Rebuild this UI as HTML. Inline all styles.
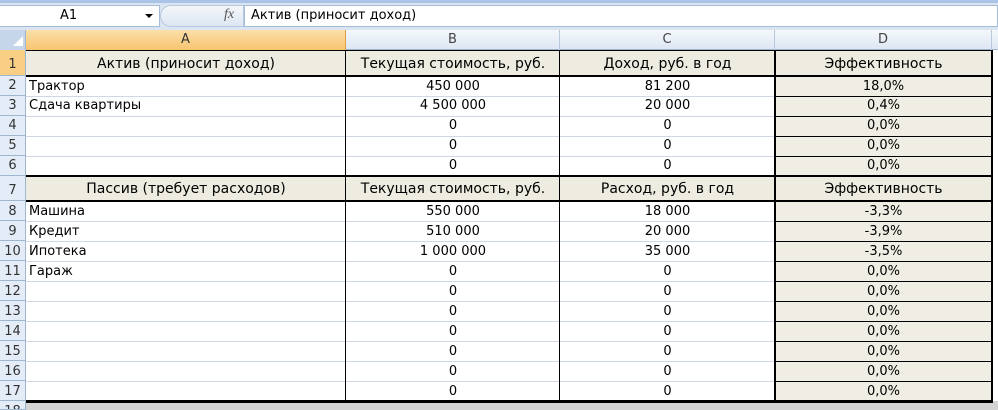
<!DOCTYPE html>
<html><head><meta charset="utf-8"><style>
*{margin:0;padding:0;box-sizing:border-box}
html{width:998px;height:410px;overflow:hidden}
body{width:998px;height:410px;overflow:hidden;background:#d4d4d4;font-family:Tahoma,"DejaVu Sans","Liberation Sans",sans-serif;font-size:13px;position:relative;color:#000}
.a{position:absolute}
.c{position:absolute;white-space:nowrap;overflow:hidden;line-height:20px}
.h{font-size:14px}
.rh{position:absolute;left:0;width:26px;background:#e4ecf7;border-bottom:1px solid #9eb6ce;border-right:1px solid #9eb6ce;text-align:center;color:#333;font-size:13px}
</style></head><body>
<div class="a" style="left:0;top:0;width:998px;height:30px;background:#dbe5f1;border-top:3px solid #a9c4e6"></div>
<div class="a" style="left:0;top:5px;width:160px;height:22px;background:#fff;border:1px solid #a5bcd8;border-left:none"></div>
<div class="c" style="left:60px;top:6px">A1</div>
<div class="a" style="left:145px;top:14px;width:0;height:0;border-left:4px solid transparent;border-right:4px solid transparent;border-top:4px solid #000"></div>
<div class="a" style="left:160px;top:5px;width:84px;height:22px;background:linear-gradient(#f4f7fb,#dce6f2);border:1px solid #b8c9de;border-radius:11px 0 0 11px"></div>
<div class="c" style="left:224px;top:5px;font-style:italic;font-family:'Liberation Serif',serif;color:#555;font-size:14px">fx</div>
<div class="a" style="left:244px;top:5px;width:754px;height:22px;background:#fff;border:1px solid #a5bcd8"></div>
<div class="c" style="left:251px;top:6px">Актив (приносит доход)</div>
<div class="a" style="left:0;top:30px;width:998px;height:20px;background:linear-gradient(#f5f8fc,#dde7f3);border-bottom:1px solid #9eb6ce"></div>
<div class="a" style="left:0;top:30px;width:26px;height:20px;background:#c6d6ea;border-right:1px solid #9eb6ce"></div>
<div class="a" style="left:13px;top:36px;width:0;height:0;border-left:10px solid transparent;border-bottom:10px solid #fff"></div>
<div class="c" style="left:26px;top:30px;width:320px;height:20px;background:linear-gradient(#fbe0a8,#f8c471);border-right:1px solid #e0a040;text-align:center;color:#333">A</div>
<div class="c" style="left:346px;top:30px;width:214px;height:20px;border-right:1px solid #b8c9de;text-align:center;color:#444">B</div>
<div class="c" style="left:560px;top:30px;width:215px;height:20px;border-right:1px solid #b8c9de;text-align:center;color:#444">C</div>
<div class="c" style="left:775px;top:30px;width:217px;height:20px;border-right:1px solid #b8c9de;text-align:center;color:#444">D</div>
<div class="a" style="left:26px;top:50px;width:972px;height:351px;background:#fff"></div>
<div class="a" style="left:775px;top:50px;width:217px;height:351px;background:#f0eee4"></div>
<div class="a" style="left:26px;top:50px;width:966px;height:26px;background:#eeece1"></div>
<div class="a" style="left:26px;top:176px;width:966px;height:25px;background:#eeece1"></div>
<div class="a" style="left:26px;top:96px;width:966px;height:0;border-top:1px solid #d0d7e5"></div>
<div class="a" style="left:26px;top:116px;width:966px;height:0;border-top:1px solid #d0d7e5"></div>
<div class="a" style="left:26px;top:136px;width:966px;height:0;border-top:1px solid #d0d7e5"></div>
<div class="a" style="left:26px;top:156px;width:966px;height:0;border-top:1px solid #d0d7e5"></div>
<div class="a" style="left:26px;top:221px;width:966px;height:0;border-top:1px solid #d0d7e5"></div>
<div class="a" style="left:26px;top:241px;width:966px;height:0;border-top:1px solid #d0d7e5"></div>
<div class="a" style="left:26px;top:261px;width:966px;height:0;border-top:1px solid #d0d7e5"></div>
<div class="a" style="left:26px;top:281px;width:966px;height:0;border-top:1px solid #d0d7e5"></div>
<div class="a" style="left:26px;top:301px;width:966px;height:0;border-top:1px solid #d0d7e5"></div>
<div class="a" style="left:26px;top:321px;width:966px;height:0;border-top:1px solid #d0d7e5"></div>
<div class="a" style="left:26px;top:341px;width:966px;height:0;border-top:1px solid #d0d7e5"></div>
<div class="a" style="left:26px;top:361px;width:966px;height:0;border-top:1px solid #d0d7e5"></div>
<div class="a" style="left:26px;top:381px;width:966px;height:0;border-top:1px solid #d0d7e5"></div>
<div class="a" style="left:775px;top:96px;width:217px;border-top:1px solid #000"></div>
<div class="a" style="left:775px;top:116px;width:217px;border-top:1px solid #000"></div>
<div class="a" style="left:775px;top:136px;width:217px;border-top:1px solid #000"></div>
<div class="a" style="left:775px;top:156px;width:217px;border-top:1px solid #000"></div>
<div class="a" style="left:775px;top:221px;width:217px;border-top:1px solid #000"></div>
<div class="a" style="left:775px;top:241px;width:217px;border-top:1px solid #000"></div>
<div class="a" style="left:775px;top:261px;width:217px;border-top:1px solid #000"></div>
<div class="a" style="left:775px;top:281px;width:217px;border-top:1px solid #000"></div>
<div class="a" style="left:775px;top:301px;width:217px;border-top:1px solid #000"></div>
<div class="a" style="left:775px;top:321px;width:217px;border-top:1px solid #000"></div>
<div class="a" style="left:775px;top:341px;width:217px;border-top:1px solid #000"></div>
<div class="a" style="left:775px;top:361px;width:217px;border-top:1px solid #000"></div>
<div class="a" style="left:775px;top:381px;width:217px;border-top:1px solid #000"></div>
<div class="a" style="left:26px;top:50px;width:967px;border-top:1px solid #000"></div>
<div class="a" style="left:26px;top:75px;width:967px;border-top:2px solid #000"></div>
<div class="a" style="left:26px;top:175px;width:967px;border-top:2px solid #000"></div>
<div class="a" style="left:26px;top:200px;width:967px;border-top:2px solid #000"></div>
<div class="a" style="left:26px;top:400px;width:967px;border-top:3px solid #000"></div>
<div class="a" style="left:345px;top:50px;height:351px;border-left:1px solid #000"></div>
<div class="a" style="left:559px;top:50px;height:351px;border-left:1px solid #000"></div>
<div class="a" style="left:774px;top:50px;height:351px;border-left:2px solid #000"></div>
<div class="a" style="left:991px;top:50px;height:351px;border-left:2px solid #000"></div>
<div class="a" style="left:26px;top:403px;width:972px;height:7px;background:#d4d4d4"></div>
<div class="rh" style="top:50px;height:26px;line-height:30px;background:#f8cf85">1</div>
<div class="rh" style="top:76px;height:20px;line-height:20px">2</div>
<div class="rh" style="top:96px;height:20px;line-height:20px">3</div>
<div class="rh" style="top:116px;height:20px;line-height:20px">4</div>
<div class="rh" style="top:136px;height:20px;line-height:20px">5</div>
<div class="rh" style="top:156px;height:20px;line-height:20px">6</div>
<div class="rh" style="top:176px;height:25px;line-height:29px">7</div>
<div class="rh" style="top:201px;height:20px;line-height:22px">8</div>
<div class="rh" style="top:221px;height:20px;line-height:22px">9</div>
<div class="rh" style="top:241px;height:20px;line-height:22px">10</div>
<div class="rh" style="top:261px;height:20px;line-height:22px">11</div>
<div class="rh" style="top:281px;height:20px;line-height:22px">12</div>
<div class="rh" style="top:301px;height:20px;line-height:22px">13</div>
<div class="rh" style="top:321px;height:20px;line-height:22px">14</div>
<div class="rh" style="top:341px;height:20px;line-height:22px">15</div>
<div class="rh" style="top:361px;height:20px;line-height:22px">16</div>
<div class="rh" style="top:381px;height:20px;line-height:22px">17</div>
<div class="rh" style="top:401px;height:9px;line-height:22px;overflow:hidden">18</div>
<div class="c h" style="left:26px;top:54px;width:320px;text-align:center">Актив (приносит доход)</div>
<div class="c h" style="left:346px;top:54px;width:214px;text-align:center">Текущая стоимость, руб.</div>
<div class="c h" style="left:560px;top:54px;width:215px;text-align:center">Доход, руб. в год</div>
<div class="c h" style="left:775px;top:54px;width:217px;text-align:center">Эффективность</div>
<div class="c" style="left:29px;top:77px">Трактор</div>
<div class="c" style="left:346px;top:77px;width:214px;text-align:center">450 000</div>
<div class="c" style="left:560px;top:77px;width:215px;text-align:center">81 200</div>
<div class="c" style="left:775px;top:77px;width:217px;text-align:center">18,0%</div>
<div class="c" style="left:29px;top:96px">Сдача квартиры</div>
<div class="c" style="left:346px;top:96px;width:214px;text-align:center">4 500 000</div>
<div class="c" style="left:560px;top:96px;width:215px;text-align:center">20 000</div>
<div class="c" style="left:775px;top:96px;width:217px;text-align:center">0,4%</div>
<div class="c" style="left:346px;top:116px;width:214px;text-align:center">0</div>
<div class="c" style="left:560px;top:116px;width:215px;text-align:center">0</div>
<div class="c" style="left:775px;top:116px;width:217px;text-align:center">0,0%</div>
<div class="c" style="left:346px;top:136px;width:214px;text-align:center">0</div>
<div class="c" style="left:560px;top:136px;width:215px;text-align:center">0</div>
<div class="c" style="left:775px;top:136px;width:217px;text-align:center">0,0%</div>
<div class="c" style="left:346px;top:156px;width:214px;text-align:center">0</div>
<div class="c" style="left:560px;top:156px;width:215px;text-align:center">0</div>
<div class="c" style="left:775px;top:156px;width:217px;text-align:center">0,0%</div>
<div class="c h" style="left:26px;top:179px;width:320px;text-align:center">Пассив (требует расходов)</div>
<div class="c h" style="left:346px;top:179px;width:214px;text-align:center">Текущая стоимость, руб.</div>
<div class="c h" style="left:560px;top:179px;width:215px;text-align:center">Расход, руб. в год</div>
<div class="c h" style="left:775px;top:179px;width:217px;text-align:center">Эффективность</div>
<div class="c" style="left:29px;top:202px">Машина</div>
<div class="c" style="left:346px;top:202px;width:214px;text-align:center">550 000</div>
<div class="c" style="left:560px;top:202px;width:215px;text-align:center">18 000</div>
<div class="c" style="left:775px;top:202px;width:217px;text-align:center">-3,3%</div>
<div class="c" style="left:29px;top:222px">Кредит</div>
<div class="c" style="left:346px;top:222px;width:214px;text-align:center">510 000</div>
<div class="c" style="left:560px;top:222px;width:215px;text-align:center">20 000</div>
<div class="c" style="left:775px;top:222px;width:217px;text-align:center">-3,9%</div>
<div class="c" style="left:29px;top:242px">Ипотека</div>
<div class="c" style="left:346px;top:242px;width:214px;text-align:center">1 000 000</div>
<div class="c" style="left:560px;top:242px;width:215px;text-align:center">35 000</div>
<div class="c" style="left:775px;top:242px;width:217px;text-align:center">-3,5%</div>
<div class="c" style="left:29px;top:262px">Гараж</div>
<div class="c" style="left:346px;top:262px;width:214px;text-align:center">0</div>
<div class="c" style="left:560px;top:262px;width:215px;text-align:center">0</div>
<div class="c" style="left:775px;top:262px;width:217px;text-align:center">0,0%</div>
<div class="c" style="left:346px;top:282px;width:214px;text-align:center">0</div>
<div class="c" style="left:560px;top:282px;width:215px;text-align:center">0</div>
<div class="c" style="left:775px;top:282px;width:217px;text-align:center">0,0%</div>
<div class="c" style="left:346px;top:302px;width:214px;text-align:center">0</div>
<div class="c" style="left:560px;top:302px;width:215px;text-align:center">0</div>
<div class="c" style="left:775px;top:302px;width:217px;text-align:center">0,0%</div>
<div class="c" style="left:346px;top:322px;width:214px;text-align:center">0</div>
<div class="c" style="left:560px;top:322px;width:215px;text-align:center">0</div>
<div class="c" style="left:775px;top:322px;width:217px;text-align:center">0,0%</div>
<div class="c" style="left:346px;top:342px;width:214px;text-align:center">0</div>
<div class="c" style="left:560px;top:342px;width:215px;text-align:center">0</div>
<div class="c" style="left:775px;top:342px;width:217px;text-align:center">0,0%</div>
<div class="c" style="left:346px;top:362px;width:214px;text-align:center">0</div>
<div class="c" style="left:560px;top:362px;width:215px;text-align:center">0</div>
<div class="c" style="left:775px;top:362px;width:217px;text-align:center">0,0%</div>
<div class="c" style="left:346px;top:382px;width:214px;text-align:center">0</div>
<div class="c" style="left:560px;top:382px;width:215px;text-align:center">0</div>
<div class="c" style="left:775px;top:382px;width:217px;text-align:center">0,0%</div>
</body></html>
